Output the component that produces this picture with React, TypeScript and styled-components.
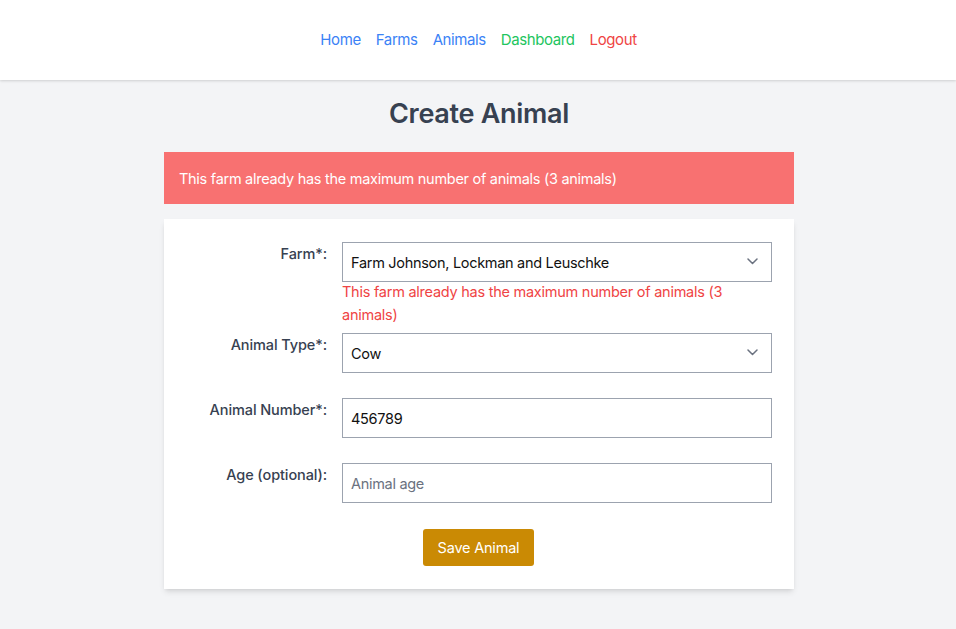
import React from "react";
import styled, { createGlobalStyle } from "styled-components";

const GlobalStyle = createGlobalStyle`
  * { box-sizing: border-box; }
  body {
    margin: 0;
    background: #f3f4f6;
    font-family: Inter, "Noto Sans", Arial, sans-serif;
    -webkit-font-smoothing: antialiased;
  }
`;

const Page = styled.div`
  min-height: 629px;
  background: #f3f4f6;
`;

const Header = styled.header`
  height: 80px;
  background: #ffffff;
  box-shadow: 0 1px 3px rgba(0, 0, 0, 0.1), 0 1px 2px rgba(0, 0, 0, 0.06);
  display: flex;
  align-items: center;
  justify-content: center;
  position: relative;
  z-index: 1;
`;

const Nav = styled.nav`
  display: flex;
  gap: 15px;
  padding-left: 1px;
`;

const NavLink = styled.a<{ $color: string }>`
  color: ${(p) => p.$color};
  font-size: 15px;
  line-height: 24px;
  text-decoration: none;
  letter-spacing: -0.4px;
`;

const Main = styled.main`
  width: 630px;
  margin: 0 auto;
  padding-top: 16px;
  position: relative;
  left: 1px;
`;

const Title = styled.h1`
  margin: 0;
  text-align: center;
  font-size: 27px;
  line-height: 36px;
  font-weight: 600;
  color: #374151;
  letter-spacing: -0.3px;
`;

const Alert = styled.div`
  margin-top: 20px;
  height: 52px;
  background: #f87171;
  color: #ffffff;
  font-size: 14.5px;
  display: flex;
  align-items: center;
  padding-left: 15px;
  letter-spacing: -0.28px;
`;

const Card = styled.form`
  margin-top: 15px;
  background: #ffffff;
  box-shadow: 0 4px 6px -1px rgba(0, 0, 0, 0.1), 0 2px 4px -2px rgba(0, 0, 0, 0.1);
  padding: 23px 22px 23px 24px;
  display: flex;
  flex-direction: column;
`;

const Row = styled.div<{ $after: number }>`
  display: flex;
  align-items: flex-start;
  gap: 15px;
  margin-bottom: ${(p) => p.$after}px;
`;

const Label = styled.label`
  width: 139px;
  flex-shrink: 0;
  text-align: right;
  font-size: 14.5px;
  line-height: 24px;
  font-weight: 500;
  color: #374151;
  letter-spacing: -0.1px;
`;

const Field = styled.div`
  flex: 1;
  display: flex;
  flex-direction: column;
`;

const Control = styled.div`
  position: relative;
  height: 40px;
  border: 1px solid #9ca3af;
  background: #ffffff;
  display: flex;
  align-items: center;
  padding: 0 8px;
`;

const Value = styled.span<{ $placeholder?: boolean }>`
  font-size: 14.5px;
  color: ${(p) => (p.$placeholder ? "#6b7280" : "#111111")};
  letter-spacing: -0.3px;
`;

const Chevron = styled.svg`
  position: absolute;
  right: 13px;
  top: 50%;
  margin-top: -4px;
`;

const ErrorText = styled.p`
  margin: -2px 0 0;
  font-size: 14.5px;
  line-height: 23px;
  color: #ef4444;
  letter-spacing: -0.25px;
`;

const Actions = styled.div`
  display: flex;
  justify-content: center;
  padding-right: 3px;
`;

const Button = styled.button`
  height: 37px;
  padding: 0 14.5px;
  background: #ca8a04;
  color: #ffffff;
  border: none;
  border-radius: 3px;
  font-family: inherit;
  font-size: 14.5px;
  letter-spacing: -0.2px;
  cursor: pointer;
`;

const ChevronIcon = () => (
  <Chevron width="11" height="7" viewBox="0 0 11 7" fill="none">
    <path d="M1 1l4.5 4.5L10 1" stroke="#6b7280" strokeWidth="1.5" strokeLinecap="round" strokeLinejoin="round" />
  </Chevron>
);

export default function App() {
  return (
    <>
      <GlobalStyle />
      <Page>
        <Header>
          <Nav>
            <NavLink href="#" $color="#3b82f6">Home</NavLink>
            <NavLink href="#" $color="#3b82f6">Farms</NavLink>
            <NavLink href="#" $color="#3b82f6">Animals</NavLink>
            <NavLink href="#" $color="#22c55e">Dashboard</NavLink>
            <NavLink href="#" $color="#ef4444">Logout</NavLink>
          </Nav>
        </Header>
        <Main>
          <Title>Create Animal</Title>
          <Alert>This farm already has the maximum number of animals (3 animals)</Alert>
          <Card onSubmit={(e) => e.preventDefault()}>
            <Row $after={7}>
              <Label>Farm*:</Label>
              <Field>
                <Control>
                  <Value>Farm Johnson, Lockman and Leuschke</Value>
                  <ChevronIcon />
                </Control>
                <ErrorText>This farm already has the maximum number of animals (3 animals)</ErrorText>
              </Field>
            </Row>
            <Row $after={25}>
              <Label>Animal Type*:</Label>
              <Field>
                <Control>
                  <Value>Cow</Value>
                  <ChevronIcon />
                </Control>
              </Field>
            </Row>
            <Row $after={25}>
              <Label>Animal Number*:</Label>
              <Field>
                <Control>
                  <Value>456789</Value>
                </Control>
              </Field>
            </Row>
            <Row $after={26}>
              <Label>Age (optional):</Label>
              <Field>
                <Control>
                  <Value $placeholder>Animal age</Value>
                </Control>
              </Field>
            </Row>
            <Actions>
              <Button type="submit">Save Animal</Button>
            </Actions>
          </Card>
        </Main>
      </Page>
    </>
  );
}
